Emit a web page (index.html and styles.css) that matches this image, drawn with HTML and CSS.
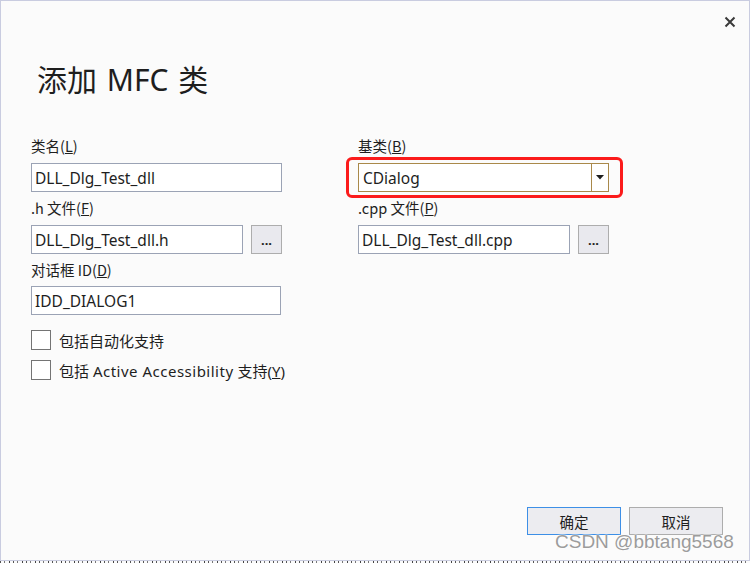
FILE: index.html
```html
<!DOCTYPE html>
<html lang="zh-CN">
<head>
<meta charset="utf-8">
<title>添加 MFC 类</title>
<link rel="stylesheet" href="styles.css">
</head>
<body>
<div class="dialog">
  <div class="close" aria-label="关闭">
    <svg width="12" height="12" viewBox="0 0 12 12"><path d="M1.5 1.5 L10.5 10.5 M10.5 1.5 L1.5 10.5" stroke="#3a3a3a" stroke-width="2" fill="none"/></svg>
  </div>
  <h1 class="title">添加 MFC 类</h1>
  <div class="form">
    <div class="col">
      <label class="lbl">类名(<u>L</u>)</label>
      <div class="row"><div class="input wide">DLL_Dlg_Test_dll</div></div>
      <label class="lbl">.h 文件(<u>F</u>)</label>
      <div class="row"><div class="input">DLL_Dlg_Test_dll.h</div><div class="browse">...</div></div>
      <label class="lbl">对话框 ID(<u>D</u>)</label>
      <div class="row"><div class="input wide id">IDD_DIALOG1</div></div>
    </div>
    <div class="col">
      <label class="lbl">基类(<u>B</u>)</label>
      <div class="row combo-wrap">
        <div class="combo"><span class="combo-text">CDialog</span><span class="combo-btn"><svg width="8" height="5" viewBox="0 0 8 5"><path d="M0 0 H8 L4 4.5 Z" fill="#1e1e1e"/></svg></span></div>
        <div class="highlight"></div>
      </div>
      <label class="lbl">.cpp 文件(<u>P</u>)</label>
      <div class="row"><div class="input">DLL_Dlg_Test_dll.cpp</div><div class="browse">...</div></div>
    </div>
  </div>
  <div class="checks">
    <div class="check"><span class="box"></span><span>包括自动化支持</span></div>
    <div class="check"><span class="box"></span><span>包括 <span class="latin">Active Accessibility</span> 支持(<u>Y</u>)</span></div>
  </div>
  <div class="footer">
    <div class="btn primary">确定</div>
    <div class="btn">取消</div>
  </div>
</div>
<div class="strip"></div>
<div class="watermark">CSDN @bbtang5568</div>
</body>
</html>
```
FILE: styles.css
```css
* { box-sizing: border-box; }
html, body { margin: 0; padding: 0; }
body {
  width: 750px;
  height: 563px;
  overflow: hidden;
  background: #fbfbfb;
  font-family: "Noto Sans", "Noto Sans CJK SC", sans-serif;
  color: #1e1e1e;
  position: relative;
}
.dialog {
  position: relative;
  width: 750px;
  height: 561px;
  border: 1px solid #c9cce0;
  background: #fbfbfb;
  display: flex;
  flex-direction: column;
  padding: 0 26px 25px 30px;
}
.close {
  position: absolute;
  top: 15px;
  right: 13px;
  width: 12px;
  height: 12px;
  display: flex;
}
.title {
  margin: 59px 0 0 6px;
  font-weight: normal;
  font-size: 30px;
  line-height: 40px;
  font-family: "Noto Sans", "Noto Sans CJK SC", sans-serif;
  letter-spacing: 0;
  word-spacing: 2px;
}
.form {
  display: grid;
  grid-template-columns: 251px 251px;
  column-gap: 76px;
  margin-top: 36px;
}
.col { display: flex; flex-direction: column; }
.lbl {
  display: block;
  font-size: 14.5px;
  line-height: 20px;
  height: 20px;
  margin-bottom: 7px;
  font-family: "Noto Sans CJK SC", sans-serif;
}
.row + .lbl { margin-top: 6px; }
.row { display: flex; gap: 8px; height: 29px; }
.input {
  width: 212px;
  height: 29px;
  border: 1px solid #9ba3b5;
  background: #fff;
  font-size: 15.5px;
  line-height: 28px;
  padding-left: 3px;
  white-space: nowrap;
  overflow: hidden;
}
.input.wide { width: 251px; }
.input.id { width: 250px; height: 29px; margin-top: -1px; }
.browse {
  width: 31px;
  height: 29px;
  border: 1px solid #adadad;
  background: #e9e9ee;
  font-size: 13px;
  line-height: 28px;
  text-align: center;
  letter-spacing: 0;
  font-weight: bold;
}
.combo-wrap { position: relative; }
.combo {
  width: 251px;
  height: 29px;
  border: 1px solid #a9894a;
  background: #fff;
  display: flex;
}
.combo-text {
  flex: 1;
  font-size: 15.5px;
  line-height: 28px;
  padding-left: 4px;
}
.combo-btn {
  width: 17px;
  border-left: 1px solid #a9894a;
  display: flex;
  align-items: center;
  justify-content: center;
  padding-bottom: 1px;
}
.highlight {
  position: absolute;
  top: -6px;
  left: -12px;
  right: -14px;
  bottom: -6px;
  border: 3px solid #fb1b1b;
  border-radius: 6px;
}
.checks {
  margin-top: 14px;
  display: flex;
  flex-direction: column;
  gap: 10px;
}
.check {
  display: flex;
  align-items: center;
  gap: 8px;
  height: 20px;
  font-size: 15px;
  font-family: "Noto Sans", "Noto Sans CJK SC", sans-serif;
}
.latin { letter-spacing: 0.5px; }
.box {
  width: 20px;
  height: 20px;
  border: 1px solid #747474;
  background: #fff;
  flex: none;
}
.footer {
  margin-top: auto;
  display: flex;
  justify-content: flex-end;
  gap: 8px;
}
.btn {
  width: 94px;
  height: 28px;
  border: 1px solid #adadad;
  background: #ececf0;
  font-family: "Noto Sans CJK SC", sans-serif;
  font-size: 14.5px;
  line-height: 27px;
  text-align: center;
}
.btn.primary { border-color: #3d8fe6; }
.strip {
  height: 2px;
  background: repeating-linear-gradient(90deg, #555 0 1px, transparent 1px 4px, #777 4px 5px, transparent 5px 9px, #444 9px 10px, transparent 10px 13px);
}
.watermark {
  position: absolute;
  left: 555px;
  top: 530px;
  font-family: "Liberation Sans", Arial, sans-serif;
  font-size: 19px;
  line-height: 24px;
  color: #9c9c9c;
  text-shadow: 0 0 2px #fff, 0 0 2px #fff;
  letter-spacing: 0;
}
```
